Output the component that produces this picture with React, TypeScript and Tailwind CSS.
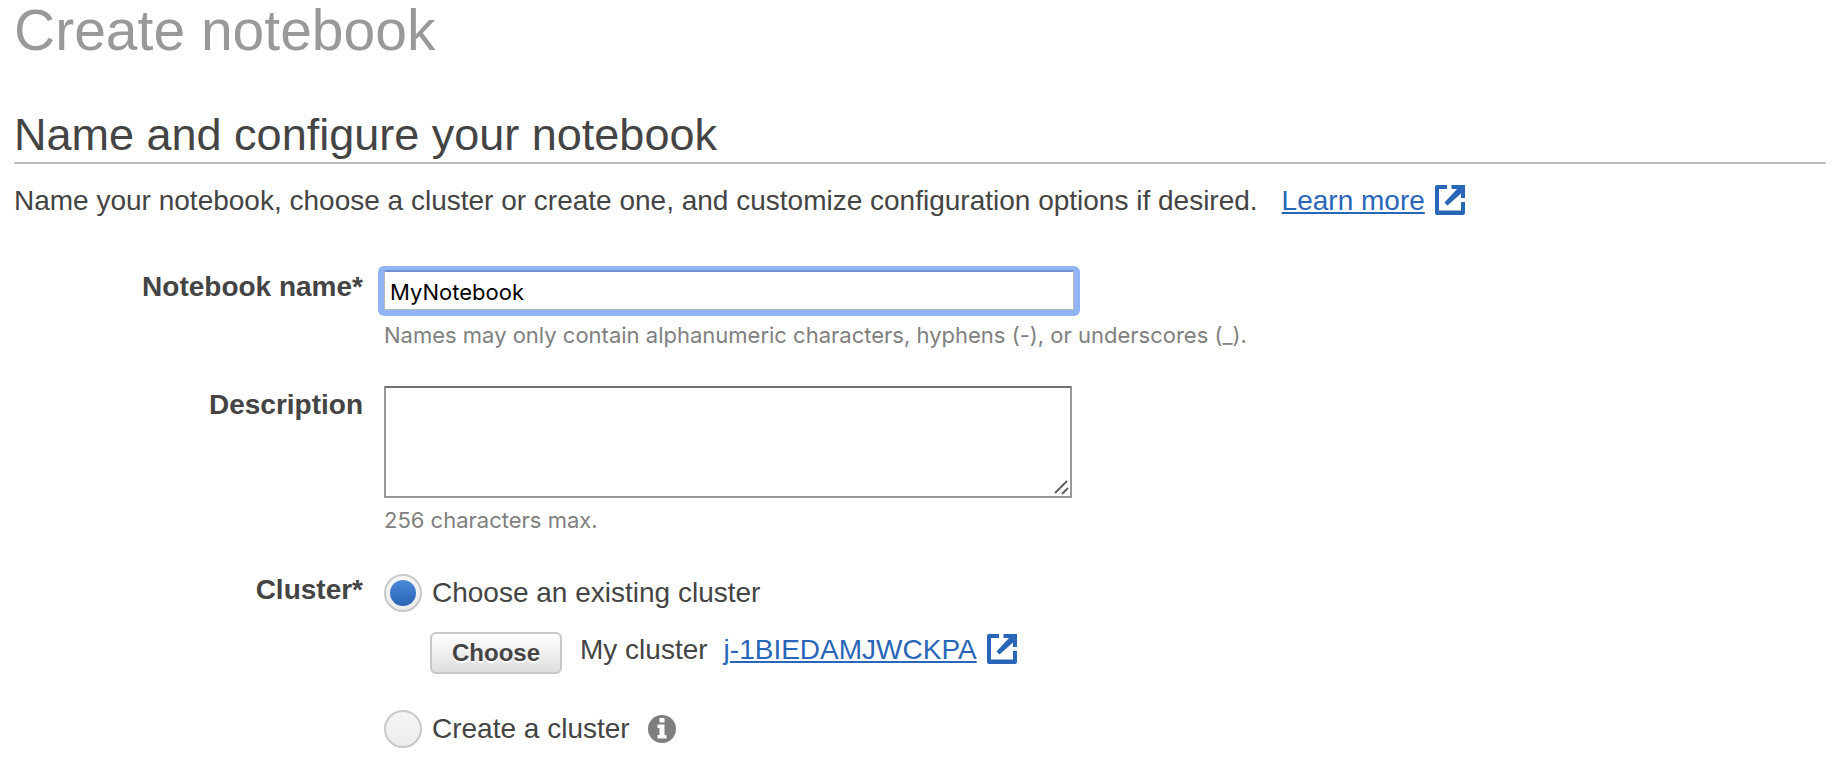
import type { ReactNode } from "react";

function ExternalIcon() {
  return (
    <svg viewBox="0 0 30 30" className="size-[30px] shrink-0" fill="#2a66b8" aria-hidden="true">
      <path d="M2 0H12V4H4V25.500H26V17H30V28Q30 30 28 30H2Q0 30 0 28V2Q0 0 2 0Z" />
      <path d="M16.500 0H30V13H26V8.500L12.500 20.500L9.500 17.500L22 4H16.500Z" />
    </svg>
  );
}

function InfoIcon() {
  return (
    <svg viewBox="0 0 28 28" className="size-7 shrink-0" aria-hidden="true">
      <circle cx="14" cy="14" r="14" fill="#7f7f7f" />
      <path fill="#fff" d="M11.500 3H16.500V7.500H11.500ZM9.500 9.500H16.500V20H18.500V23.500H9.500V20H11.500V13H9.500Z" />
    </svg>
  );
}

function TextLink({ children }: { children: ReactNode }) {
  return (
    <a href="#" className="flex items-start gap-[10px] text-[#2a66b8]">
      <span className="underline decoration-2 underline-offset-2">{children}</span>
      <span className="flex pt-[2px]">
        <ExternalIcon />
      </span>
    </a>
  );
}

function Row({ label, htmlFor, children }: { label: string; htmlFor?: string; children: ReactNode }) {
  return (
    <div className="flex gap-[21px]">
      <div className="w-[349px] shrink-0 text-right font-bold">
        {htmlFor ? <label htmlFor={htmlFor}>{label}</label> : <span id="cluster-label">{label}</span>}
      </div>
      <div className="min-w-0 flex-1">{children}</div>
    </div>
  );
}

function Radio({ label, checked }: { label: string; checked?: boolean }) {
  return (
    <label className="flex items-center gap-[10px]">
      <span className="grid size-[38px] shrink-0">
        <input
          type="radio"
          name="cluster"
          defaultChecked={checked}
          className="peer col-start-1 row-start-1 size-[38px] appearance-none rounded-full border-2 border-[#c8c8c8] bg-linear-to-b from-[#f6f6f6] to-[#ececec]"
        />
        <span className="pointer-events-none col-start-1 row-start-1 hidden size-[26px] place-self-center rounded-full bg-linear-to-b from-[#4a8ad8] to-[#2a64b4] peer-checked:block" />
      </span>
      {label}
    </label>
  );
}

const helpClass = "font-[Inter,sans-serif] text-[22px] leading-7 text-[#808080]";

export default function App() {
  return (
    <main className="min-h-screen bg-white pr-[10px] pb-5 pl-[14px] font-['Liberation_Sans',Arial,sans-serif] text-[28px] leading-9 text-[#444444]">
      <h1 className="text-[57px] leading-[60px] text-[#999999]">Create notebook</h1>
      <h2 className="mt-12 border-b-2 border-[#bfbfbf] text-[45px] leading-[54px]">
        Name and configure your notebook
      </h2>
      <div className="mt-[19px] flex gap-6">
        <p>Name your notebook, choose a cluster or create one, and customize configuration options if desired.</p>
        <TextLink>Learn more</TextLink>
      </div>

      <form className="mt-[50px] flex flex-col gap-[38px]">
        <Row label="Notebook name*" htmlFor="name">
          <div className="-mt-[3px] -ml-[6px] max-w-[702px] rounded-md bg-[#91b4f5] px-[6px] pt-1 pb-[6px]">
            <input
              id="name"
              type="text"
              defaultValue="MyNotebook"
              className="block h-10 w-full rounded-none border border-t-2 border-[#b9b9b9] border-t-[#6f93d2] bg-white px-[5px] pt-[2px] font-[Inter,sans-serif] text-[22px] text-black outline-none"
            />
          </div>
          <p className={`mt-[5px] ${helpClass}`}>
            Names may only contain alphanumeric characters, hyphens (-), or underscores (_).
          </p>
        </Row>

        <Row label="Description" htmlFor="description">
          <div className="relative -mt-px max-w-[688px]">
            <textarea
              id="description"
              className="block h-28 w-full resize-none border-2 border-[#999999] border-t-[#707070] p-2 outline-none"
            />
            <svg viewBox="0 0 16 16" className="pointer-events-none absolute right-[2px] bottom-[2px] size-4" stroke="#606060" strokeWidth="2" aria-hidden="true">
              <path d="M1 13L13 1M8 14L14 8" />
            </svg>
          </div>
          <p className={`mt-2 ${helpClass}`}>256 characters max.</p>
        </Row>

        <Row label="Cluster*">
          <div role="radiogroup" aria-labelledby="cluster-label" className="pt-[2px]">
            <Radio label="Choose an existing cluster" checked />
            <div className="mt-5 ml-[46px] flex items-start">
              <button
                type="button"
                className="h-[42px] rounded-md border-2 border-[#c8c8c8] bg-linear-to-b from-white to-[#dedede] px-5 text-[24px] leading-9 font-bold text-shadow-[0_2px_0_#ffffff]"
              >
                Choose
              </button>
              <span className="mr-4 ml-[18px]">My cluster</span>
              <TextLink>j-1BIEDAMJWCKPA</TextLink>
            </div>
            <div className="mt-9 flex items-center gap-[18px]">
              <Radio label="Create a cluster" />
              <InfoIcon />
            </div>
          </div>
        </Row>
      </form>
    </main>
  );
}
